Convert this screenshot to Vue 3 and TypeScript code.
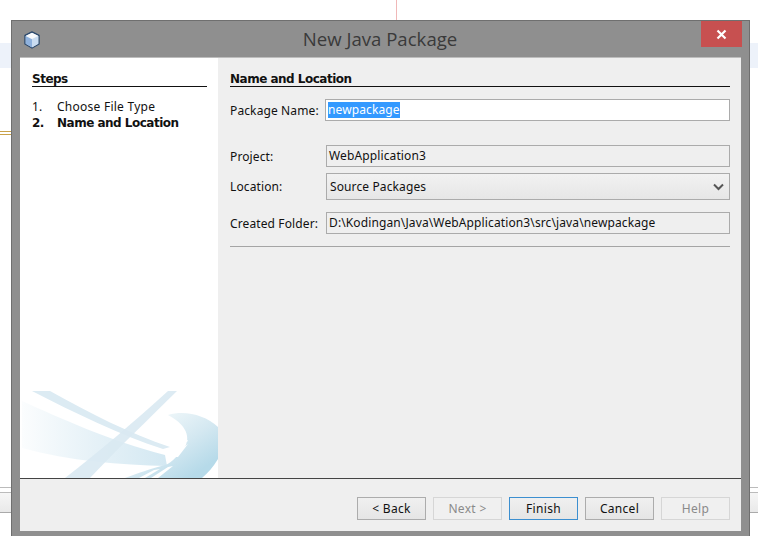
<script setup lang="ts">
const steps = [
  { num: "1.", label: "Choose File Type", active: false },
  { num: "2.", label: "Name and Location", active: true },
];
const buttons = [
  { label: "< Back", state: "" },
  { label: "Next >", state: "disabled" },
  { label: "Finish", state: "focused" },
  { label: "Cancel", state: "" },
  { label: "Help", state: "disabled" },
];
</script>

<template>
  <div class="desktop">
    <!-- bits of the IDE behind the dialog -->
    <div class="bg-band"></div>
    <div class="bg-mark"></div>
    <div class="bg-pink"></div>
    <div class="bg-bottom"></div>

    <div class="window">
      <div class="titlebar">
        <svg class="app-icon" width="16" height="18" viewBox="0 0 16 18">
          <path d="M8 1 L15 4.5 L15 13 L8 17 L1 13 L1 4.5 Z" fill="#dfe9f5" stroke="#2c4a6e" stroke-width="1.4" stroke-linejoin="round" />
          <path d="M1.7 5 L8 8.2 L8 16.4 L1.7 12.8 Z" fill="#8fb2de" />
          <path d="M14.3 5 L8 8.2 L8 16.4 L14.3 12.8 Z" fill="#c9dcf1" />
          <path d="M8 1.7 L14.2 4.7 L8 7.8 L1.8 4.7 Z" fill="#f7f9fc" />
        </svg>
        <span class="title">New Java Package</span>
        <div class="close">
          <svg width="11" height="11" viewBox="0 0 11 11">
            <path d="M1.5 1.5 L9.5 9.5 M9.5 1.5 L1.5 9.5" stroke="#fff" stroke-width="2.2" />
          </svg>
        </div>
      </div>

      <div class="client">
        <div class="main">
          <aside class="steps">
            <h2 class="heading">Steps</h2>
            <ol class="step-list">
              <li v-for="step in steps" :key="step.num" :class="{ active: step.active }">
                <span class="step-num">{{ step.num }}</span>{{ step.label }}
              </li>
            </ol>
            <svg class="art" width="198" height="87" viewBox="0 0 198 87">
              <defs>
                <linearGradient id="swoosh" x1="0" y1="0" x2="1" y2="0">
                  <stop offset="0" stop-color="#d8eaf3" stop-opacity="0.1" />
                  <stop offset="0.5" stop-color="#d8eaf3" stop-opacity="0.65" />
                  <stop offset="1" stop-color="#d3e8f2" />
                </linearGradient>
                <linearGradient id="arc" x1="0.3" y1="0.05" x2="0.95" y2="0.75">
                  <stop offset="0" stop-color="#f1f8fa" />
                  <stop offset="0.55" stop-color="#d4e8f1" />
                  <stop offset="1" stop-color="#b6dae9" />
                </linearGradient>
              </defs>
              <path d="M2 10 C40 27 90 50 145 64 L147 75 C100 74 50 70 2 57 Z" fill="url(#swoosh)" />
              <path d="M12 0 L30 0 C70 22 110 43 150 56 L143 58 C100 44 55 22 12 0 Z" fill="#dcebf3" />
              <path d="M148 0 L157 0 C125 32 100 55 70 87 L45 87 C80 60 115 30 148 0 Z" fill="#d9e9f2" fill-opacity="0.9" />
              <path d="M148 24 C165 19 185 24 198 36 L198 68 C193 76 188 82 182 87 L105 87 C118 82 130 78 145 74 C152 72 160 62 166 54 C170 44 165 33 148 24 Z" fill="url(#arc)" />
              <path d="M166 47 L146 62 L150 62 L168 50 Z" fill="#fff" />
              <path d="M168 53 L155 62 L152 66 L158 66 Z" fill="#fff" />
              <path d="M119 87 L134 79 L140 78 L125 87 Z" fill="#fff" />
              <path d="M131 87 L148 76 L153 75 L138 87 Z" fill="#fff" />
            </svg>
          </aside>

          <section class="panel">
            <h2 class="heading">Name and Location</h2>
            <div class="form">
              <label>Package Name:</label>
              <div class="field editable"><span class="selected">newpackage</span></div>
            </div>
            <div class="form lower">
              <label>Project:</label>
              <div class="field">WebApplication3</div>
              <label>Location:</label>
              <div class="select">
                <span>Source Packages</span>
                <svg width="11" height="8" viewBox="0 0 11 8">
                  <path d="M1 1.5 L5.5 6 L10 1.5" fill="none" stroke="#555" stroke-width="2" />
                </svg>
              </div>
              <label class="spaced">Created Folder:</label>
              <div class="field spaced">D:\Kodingan\Java\WebApplication3\src\java\newpackage</div>
            </div>
            <hr class="rule" />
          </section>
        </div>

        <footer class="footer">
          <button
            v-for="btn in buttons"
            :key="btn.label"
            type="button"
            class="btn"
            :class="btn.state"
          >{{ btn.label }}</button>
        </footer>
      </div>
    </div>
  </div>
</template>

<style>
html, body {
  margin: 0;
  background: #fff;
}
</style>

<style scoped>
.desktop {
  position: relative;
  width: 758px;
  height: 536px;
  overflow: hidden;
  background: #fff;
  font-family: "Noto Sans", "Liberation Sans", sans-serif;
  font-size: 12px;
  letter-spacing: 0.12px;
  color: #111;
}

.bg-band {
  position: absolute;
  left: 0;
  right: 0;
  top: 43px;
  height: 25px;
  background: #edf2fa;
}

.bg-mark {
  position: absolute;
  left: 0;
  top: 131px;
  width: 11px;
  height: 4px;
  border-top: 1px solid #c9a24a;
  border-bottom: 1px solid #c9a24a;
  box-sizing: border-box;
}

.bg-pink {
  position: absolute;
  left: 396px;
  top: 0;
  width: 1px;
  height: 20px;
  background: #f0b8b8;
}

.bg-bottom {
  position: absolute;
  left: 0;
  right: 0;
  top: 487px;
  height: 26px;
  box-sizing: border-box;
  border-top: 1px solid #bbb;
  border-bottom: 1px solid #aaa;
  background: linear-gradient(#fff 0, #fff 4px, #bbb 4px, #bbb 5px, #f6f6f6 5px, #e9e9e9 100%);
}

.window {
  position: absolute;
  left: 11px;
  top: 20px;
  width: 739px;
  height: 516px;
  box-sizing: border-box;
  display: flex;
  flex-direction: column;
  background: #8f8f8f;
  border: 1px solid #6f6f6f;
  border-bottom: 0;
  padding: 0 8px 5px 8px;
}

.titlebar {
  position: relative;
  flex: none;
  height: 37px;
  display: flex;
  align-items: center;
  justify-content: center;
}

.app-icon {
  position: absolute;
  left: 4px;
  top: 10px;
}

.title {
  font-family: "Open Sans", "Noto Sans", sans-serif;
  font-size: 18.6px;
  letter-spacing: 0;
  color: #3a3a3a;
  margin-right: 1px;
  margin-bottom: 2px;
}

.close {
  position: absolute;
  right: -1px;
  top: 0;
  width: 41px;
  height: 26px;
  background: #c75050;
  display: flex;
  align-items: center;
  justify-content: center;
}

.client {
  flex: 1;
  display: flex;
  flex-direction: column;
  min-height: 0;
  background: #efefef;
  border-top: 1px solid #bdbdbd;
  margin-top: -1px;
}

.main {
  flex: 1;
  display: flex;
  min-height: 0;
}

.heading {
  margin: 0;
  height: 15px;
  line-height: 17px;
  font-size: 12px;
  font-weight: 700;
  font-family: "DejaVu Sans", sans-serif;
  letter-spacing: -0.5px;
  color: #111;
  border-bottom: 1px solid #111;
}

.steps {
  position: relative;
  flex: none;
  box-sizing: border-box;
  width: 198px;
  padding: 13px 11px 0 12px;
  background: #fff;
}

.step-list {
  list-style: none;
  margin: 12px 0 0;
  padding: 0;
  line-height: 16px;
  letter-spacing: 0.25px;
}

.step-list .active {
  font-family: "DejaVu Sans", sans-serif;
  font-size: 12px;
  font-weight: 700;
  letter-spacing: -0.5px;
}

.step-num {
  display: inline-block;
  width: 25px;
}

.art {
  position: absolute;
  left: 0;
  bottom: 0;
}

.panel {
  flex: 1;
  min-width: 0;
  padding: 13px 11px 0 12px;
}

.form {
  display: grid;
  grid-template-columns: 95px 1fr;
  align-items: center;
  margin-top: 12px;
}

.form.lower {
  grid-template-columns: 96px 1fr;
  margin-top: 24px;
  row-gap: 6px;
}

.field {
  box-sizing: border-box;
  height: 22px;
  line-height: 20px;
  padding: 0 2px;
  border: 1px solid #ababab;
  white-space: nowrap;
}

.field.editable {
  background: #fff;
}

.field.spaced,
label.spaced {
  margin-top: 6px;
}

.selected {
  background: #3399ff;
  color: #fff;
  display: inline-block;
  line-height: 16px;
}

.select {
  box-sizing: border-box;
  height: 27px;
  padding: 0 5px 0 3px;
  display: flex;
  align-items: center;
  justify-content: space-between;
  border: 1px solid #ababab;
  background: linear-gradient(#f2f2f2, #e6e6e6);
}

.rule {
  margin: 12px 0 0;
  border: 0;
  border-top: 1px solid #a5a5a5;
}

.footer {
  flex: none;
  box-sizing: border-box;
  height: 53px;
  padding: 18px 11px 0 0;
  display: flex;
  justify-content: flex-end;
  gap: 7px;
  border-top: 1px solid #444;
}

.btn {
  box-sizing: border-box;
  width: 69px;
  height: 23px;
  padding: 0;
  font: inherit;
  letter-spacing: 0.3px;
  color: #111;
  border: 1px solid #acacac;
  background: linear-gradient(#f0f0f0, #e5e5e5);
}

.btn.disabled {
  color: #8a8a8a;
  border-color: #d6d6d6;
  background: #f0f0f0;
}

.btn.focused {
  border-color: #3c8fd0;
}
</style>
